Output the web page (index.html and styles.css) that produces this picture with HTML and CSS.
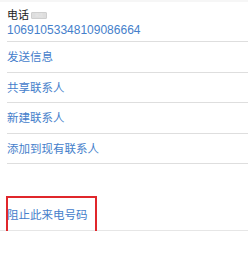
FILE: index.html
```html
<!DOCTYPE html>
<html lang="zh">
<head>
  <meta charset="UTF-8">
  <meta name="viewport" content="width=device-width, initial-scale=1.0">
  <title>联系人</title>
  <link rel="stylesheet" href="styles.css">
</head>
<body>
  <div id="card">
    <div class="phone">
      <div class="label">电话 <span class="badge">首选</span></div>
      <div class="number">10691053348109086664</div>
    </div>
    <div class="row">发送信息</div>
    <div class="row">共享联系人</div>
    <div class="row">新建联系人</div>
    <div class="row">添加到现有联系人</div>
    <div class="block-section">
      <div class="row block-row">阻止此来电号码</div>
    </div>
  </div>
</body>
</html>
```
FILE: styles.css
```css
body {
  margin: 0;
  padding: 0;
  background: #fff;
  border-top: 2px solid #f6f6f6;
  font-family: 'Liberation Sans', 'Noto Sans CJK SC', sans-serif;
}
#card {
  padding-left: 7px;
}
.phone {
  height: 40px;
  box-sizing: border-box;
  padding-top: 6px;
  border-bottom: 1px solid #dedede;
}
.label {
  font-size: 11px;
  line-height: 14px;
  color: #222;
  display: flex;
  align-items: center;
  gap: 2px;
}
.badge {
  display: inline-block;
  width: 16px;
  height: 7px;
  box-sizing: border-box;
  border: 1px solid #cfcfcf;
  border-radius: 1px;
  background: #dedede;
  color: #e8e8e8;
  font-size: 4px;
  line-height: 5px;
  text-align: center;
  overflow: hidden;
}
.number {
  font-size: 12px;
  line-height: 15px;
  margin-top: 1px;
  color: #4580cb;
}
.row {
  height: 30.5px;
  line-height: 31px;
  box-sizing: border-box;
  border-bottom: 1px solid #dedede;
  font-size: 11.5px;
  color: #4580cb;
}
.block-section {
  margin-top: 36px;
  margin-left: -7px;
}
.block-row {
  position: relative;
  padding-left: 7px;
  border-bottom-color: #e6e6e6;
}
.block-row::after {
  content: '';
  position: absolute;
  left: 6px;
  top: -4px;
  width: 91px;
  height: 37px;
  box-sizing: border-box;
  border: 2px solid #e0262b;
}
```
